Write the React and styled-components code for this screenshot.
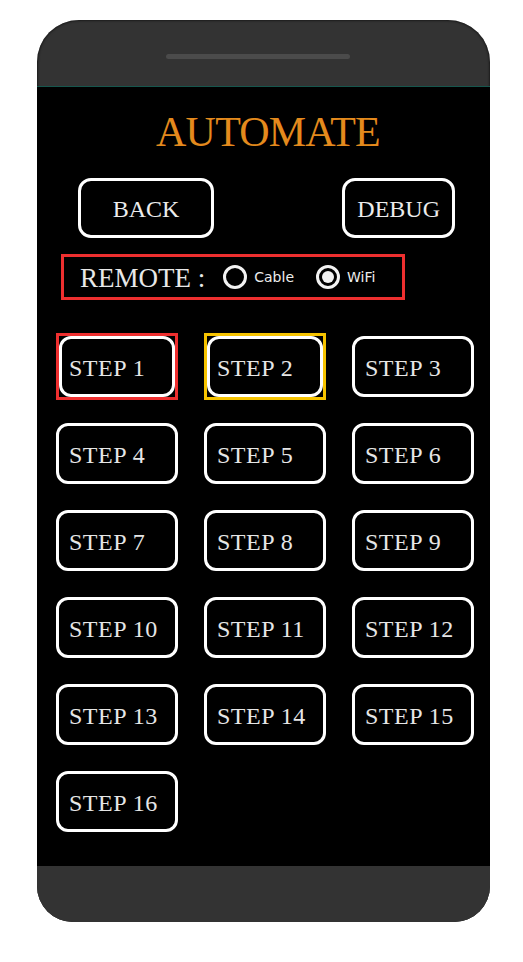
import styled, { createGlobalStyle } from 'styled-components'

const GlobalStyle = createGlobalStyle`
  body {
    margin: 0;
    background: #ffffff;
    font-family: 'Liberation Serif', 'Times New Roman', serif;
  }
`

const steps = Array.from({ length: 16 }, (_, i) => i + 1)
const highlights = { 1: '#ee2f2f', 2: '#f6c300' }

const App = () => {
  return (
    <Page>
      <GlobalStyle />
      <Phone>
        <TopBezel>
          <Speaker />
        </TopBezel>
        <Screen>
          <Title>AUTOMATE</Title>
          <NavRow>
            <NavButton>BACK</NavButton>
            <NavButton>DEBUG</NavButton>
          </NavRow>
          <RemoteBox>
            <RemoteLabel>REMOTE :</RemoteLabel>
            <RadioOption>
              <RadioCircle />
              <RadioText>Cable</RadioText>
            </RadioOption>
            <RadioOption>
              <RadioCircle checked />
              <RadioText>WiFi</RadioText>
            </RadioOption>
          </RemoteBox>
          <StepGrid>
            {steps.map((n) => (
              <StepCell key={n} $mark={highlights[n]}>
                <StepButton $inset={!!highlights[n]}>STEP {n}</StepButton>
              </StepCell>
            ))}
          </StepGrid>
        </Screen>
        <BottomBezel />
      </Phone>
    </Page>
  )
}

export default App

const Page = styled.div`
  padding: 20px 0 40px 37px;
`

const Phone = styled.div`
  width: 453px;
  background: #333333;
  border-radius: 42px 42px 36px 36px;
  overflow: hidden;
  box-shadow: inset 0 0 3px #000;
`

const TopBezel = styled.div`
  height: 66px;
  border-bottom: 1px solid #16564d;
  display: flex;
  justify-content: center;
  align-items: flex-start;
`

const Speaker = styled.div`
  width: 184px;
  height: 5px;
  margin-top: 34px;
  margin-right: 11px;
  border-radius: 3px;
  background: #4b4b4b;
`

const Screen = styled.div`
  height: 779px;
  background: #000000;
  padding-top: 24px;
  box-sizing: border-box;
  display: flex;
  flex-direction: column;
`

const Title = styled.h1`
  margin: 0;
  font-weight: normal;
  font-size: 42px;
  line-height: 42px;
  letter-spacing: -0.8px;
  color: #e48a1d;
  text-align: center;
  padding-left: 9px;
`

const NavRow = styled.div`
  display: flex;
  justify-content: space-between;
  padding: 0 35px 0 41px;
  margin-top: 25px;
`

const NavButton = styled.div`
  height: 60px;
  min-width: 112px;
  padding: 3px 12px 0;
  box-sizing: border-box;
  border: 3px solid #ffffff;
  border-radius: 13px;
  display: flex;
  align-items: center;
  justify-content: center;
  color: #ececec;
  font-size: 24px;
  &:first-child {
    width: 136px;
  }
`

const RemoteBox = styled.div`
  margin: 16px 0 0 24px;
  width: 344px;
  height: 46px;
  box-sizing: border-box;
  border: 3px solid #ee2f2f;
  display: flex;
  align-items: center;
  padding-left: 16px;
  gap: 18px;
`

const RemoteLabel = styled.span`
  color: #e8e8e8;
  font-size: 27px;
  line-height: 1;
  padding-top: 2px;
  white-space: pre;
`

const RadioOption = styled.div`
  display: flex;
  align-items: center;
  gap: 7px;
  margin-right: 4px;
`

const RadioCircle = styled.span`
  width: 24px;
  height: 24px;
  box-sizing: border-box;
  border: 3px solid #f2f2f2;
  border-radius: 50%;
  display: flex;
  align-items: center;
  justify-content: center;
  &::after {
    content: '';
    width: 12px;
    height: 12px;
    border-radius: 50%;
    background: #f2f2f2;
    display: ${(p) => (p.checked ? 'block' : 'none')};
  }
`

const RadioText = styled.span`
  font-family: 'DejaVu Sans', sans-serif;
  font-size: 14px;
  color: #ececec;
`

const StepGrid = styled.div`
  display: grid;
  grid-template-columns: repeat(3, 122px);
  column-gap: 26px;
  row-gap: 20px;
  margin: 33px 0 0 19px;
`

const StepCell = styled.div`
  height: 67px;
  box-sizing: border-box;
  padding: ${(p) => (p.$mark ? '0' : '3px 0')};
  border: ${(p) => (p.$mark ? `3px solid ${p.$mark}` : 'none')};
  display: flex;
`

const StepButton = styled.div`
  flex: 1;
  box-sizing: border-box;
  border: 3px solid #ffffff;
  border-radius: 12px;
  display: flex;
  align-items: center;
  padding: 3px 0 0 ${(p) => (p.$inset ? '7px' : '10px')};
  color: #e6e6e6;
  font-size: 24px;
  letter-spacing: 0.5px;
  white-space: nowrap;
`

const BottomBezel = styled.div`
  height: 56px;
  background: #333333;
`
